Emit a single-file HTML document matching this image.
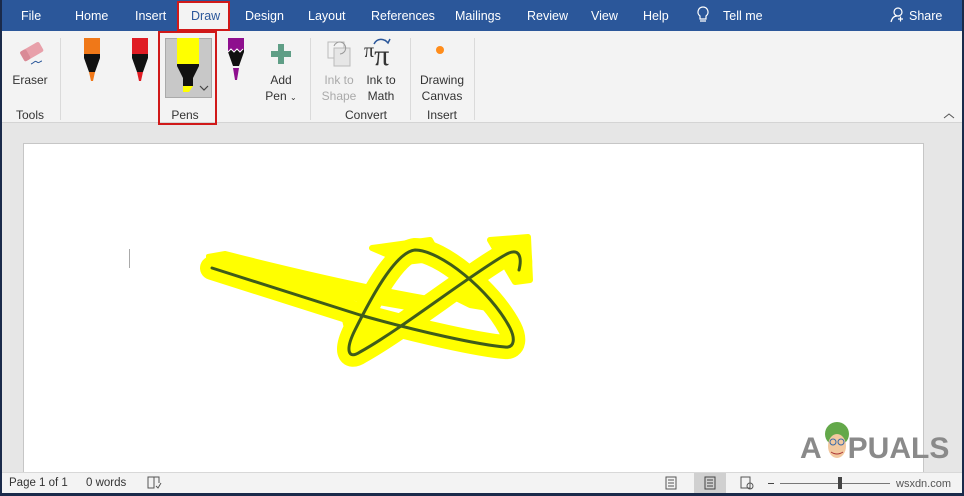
<!DOCTYPE html>
<html><head><meta charset="utf-8"><style>
*{margin:0;padding:0;box-sizing:border-box}
body{width:964px;height:496px;overflow:hidden;position:relative;background:#e6e6e6;font-family:"Liberation Sans",sans-serif;font-size:12px;color:#333}
.abs{position:absolute}
#tb{left:0;top:0;width:964px;height:31px;background:#2b579a}
.tab{position:absolute;top:9px;color:#fff;font-size:12.5px;white-space:nowrap}
#rib{left:0;top:31px;width:964px;height:92px;background:#f3f3f3;border-bottom:1px solid #d4d4d4}
.lbl{position:absolute;font-size:12px;color:#333;text-align:center;white-space:nowrap;line-height:16px}
.sep{position:absolute;top:38px;width:1px;height:82px;background:#dadada}
#status{left:0;top:472px;width:964px;height:24px;background:#f3f3f3;border-top:1px solid #d8d8d8}
</style></head><body>
<div id="tb" class="abs"></div>
<div class="abs" style="left:177px;top:1px;width:53px;height:30px;background:#f3f3f3;border:2px solid #d01919"></div>
<span class="tab" style="left:21px">File</span>
<span class="tab" style="left:75px">Home</span>
<span class="tab" style="left:135px">Insert</span>
<span class="tab" style="left:191px;color:#2b579a">Draw</span>
<span class="tab" style="left:245px">Design</span>
<span class="tab" style="left:308px">Layout</span>
<span class="tab" style="left:371px">References</span>
<span class="tab" style="left:455px">Mailings</span>
<span class="tab" style="left:527px">Review</span>
<span class="tab" style="left:591px">View</span>
<span class="tab" style="left:643px">Help</span>
<svg class="abs" style="left:696px;top:6px" width="14" height="18" viewBox="0 0 14 18"><path d="M7 1a5 5 0 0 0-3 9v3h6v-3a5 5 0 0 0-3-9zM4 15h6" fill="none" stroke="#fff" stroke-width="1.2"/></svg>
<span class="tab" style="left:723px">Tell me</span>
<svg class="abs" style="left:889px;top:7px" width="16" height="16" viewBox="0 0 16 16"><circle cx="9" cy="5" r="4" fill="none" stroke="#fff" stroke-width="1.2"/><path d="M2 15c1-4 3-6 6-6M9 12h5M11.5 9.5v5" fill="none" stroke="#fff" stroke-width="1.2"/></svg>
<span class="tab" style="left:909px">Share</span>

<div id="rib" class="abs"></div>
<svg class="abs" style="left:17px;top:40px" width="30" height="28" viewBox="0 0 30 28"><g transform="rotate(-30 15 12)"><rect x="4" y="6" width="22" height="11" rx="2" fill="#e8a0aa"/><rect x="4" y="6" width="7" height="11" rx="2" fill="#d98a96"/></g><path d="M14 24c3-1 4-4 6-2s3-1 5-1" fill="none" stroke="#2b579a" stroke-width="1"/></svg>
<div class="lbl" style="left:10px;top:72px;width:40px">Eraser</div>
<div class="lbl" style="left:10px;top:107px;width:40px">Tools</div>
<div class="sep" style="left:60px"></div>
<svg class="abs" style="left:82px;top:38px" width="20" height="44" viewBox="0 0 20 44"><rect x="2" y="0" width="16" height="16" fill="#f07818"/><path d="M2 16h16v4l-5 14h-6l-5-14z" fill="#111"/><path d="M7 34h6l-2 9h-2z" fill="#f07818"/></svg>
<svg class="abs" style="left:130px;top:38px" width="20" height="44" viewBox="0 0 20 44"><rect x="2" y="0" width="16" height="16" fill="#e01c24"/><path d="M2 16h16v4l-5 14h-6l-5-14z" fill="#111"/><path d="M7 34h6l-2 9h-2z" fill="#e01c24"/></svg>
<div class="abs" style="left:165px;top:38px;width:47px;height:60px;background:#c8c8c8;border:1px solid #aaa"></div>
<svg class="abs" style="left:173px;top:38px" width="32" height="58" viewBox="0 0 32 58"><rect x="4" y="0" width="22" height="26" fill="#ffff00"/><path d="M4 26h22v2l-6 12v8h-10v-8l-6-12z" fill="#111"/><path d="M10 48h10l-4 6h-6z" fill="#ffff00"/></svg>
<svg class="abs" style="left:198px;top:84px" width="12" height="8"><path d="M2 2l4 4 4-4" fill="none" stroke="#444" stroke-width="1.2"/></svg>
<div class="abs" style="left:158px;top:31px;width:59px;height:94px;border:2px solid #d01919"></div>
<div class="lbl" style="left:165px;top:107px;width:40px">Pens</div>
<svg class="abs" style="left:226px;top:38px" width="20" height="44" viewBox="0 0 20 44"><rect x="2" y="0" width="16" height="14" fill="#8e0f8e"/><path d="M2 14l3-3 3 3 3-3 3 3 3-3 1 1v2l-5 14h-6l-5-14z" fill="#111"/><path d="M2 14l3-3 3 3 3-3 3 3 3-3" fill="none" stroke="#fff" stroke-width="1"/><path d="M7 30h6l-2 12h-2z" fill="#8e0f8e"/></svg>
<svg class="abs" style="left:271px;top:44px" width="20" height="20"><path d="M7 0h6v7h7v6h-7v7h-6v-7h-7v-6h7z" fill="#5f9e86"/></svg>
<div class="lbl" style="left:258px;top:72px;width:46px">Add<br>Pen <span style="font-size:8px">&#8964;</span></div>
<div class="sep" style="left:310px"></div>
<svg class="abs" style="left:324px;top:38px" width="30" height="34"><rect x="4" y="4" width="16" height="16" fill="none" stroke="#bbb"/><rect x="10" y="10" width="16" height="18" fill="#e6e6e6" stroke="#bbb"/><path d="M10 8a6 6 0 1 1 6 8" fill="none" stroke="#999"/></svg>
<div class="lbl" style="left:318px;top:72px;width:42px;color:#aaa">Ink to<br>Shape</div>
<div class="abs" style="left:364px;top:34px;font-family:'Liberation Serif',serif;font-size:30px;color:#333;line-height:34px"><span style="font-size:20px;vertical-align:8px">π</span>π</div>
<svg class="abs" style="left:372px;top:36px" width="20" height="10"><path d="M2 8c3-6 10-6 14-1M13 4l3 3 2-4" fill="none" stroke="#2b579a" stroke-width="1.5"/></svg>
<div class="lbl" style="left:360px;top:72px;width:42px">Ink to<br>Math</div>
<div class="sep" style="left:410px"></div>
<div class="abs" style="left:436px;top:46px;width:8px;height:8px;border-radius:50%;background:#ff8c1a"></div>
<div class="lbl" style="left:414px;top:72px;width:56px">Drawing<br>Canvas</div>
<div class="lbl" style="left:345px;top:107px;width:30px">Convert</div>
<div class="lbl" style="left:426px;top:107px;width:32px">Insert</div>
<div class="sep" style="left:474px"></div>
<svg class="abs" style="left:943px;top:112px" width="12" height="8"><path d="M1 6l5-4 5 4" fill="none" stroke="#555" stroke-width="1"/></svg>

<div class="abs" style="left:23px;top:143px;width:901px;height:340px;background:#fff;border:1px solid #c6c6c6"></div>
<div class="abs" style="left:129px;top:249px;width:1px;height:19px;background:#aaa"></div>
<svg class="abs" style="left:0;top:0" width="964" height="496">
<g fill="#ffff00" stroke="#ffff00" stroke-linejoin="round">
<path d="M208,256 L225,253 C300,272 380,290 440,300 L430,312 C360,300 280,285 208,275 Z" stroke-width="4"/>
<path d="M212,268 L360,315 C420,332 480,345 505,347 C515,348 515,338 510,328 C490,290 440,250 415,250 C395,252 370,300 355,330 C345,350 348,360 360,352 C400,330 470,275 505,255 C520,246 522,258 519,270" fill="none" stroke-width="24" stroke-linecap="round"/>
<path d="M372,248 L430,240 L440,258 L405,262 Z M490,240 L528,237 L530,280 L515,282 Z M440,290 L480,290 L500,310 L470,305 Z M345,320 L375,308 L380,325 L350,340 Z" stroke-width="6"/>
</g>
<path d="M212,268 L360,315 C420,332 480,345 505,347 C515,348 515,338 510,328 C490,290 440,250 415,250 C395,252 370,300 355,330 C345,350 348,360 360,352 C400,330 470,275 505,255 C520,246 522,258 519,270" fill="none" stroke="#3f5c1a" stroke-width="3" stroke-linecap="round"/>
</svg>
<div class="abs" style="left:800px;top:432px;font-size:30px;font-weight:bold;color:#8a8a8a;white-space:nowrap;line-height:34px">A<span style="display:inline-block;width:26px"></span>PUALS</div>
<svg class="abs" style="left:822px;top:418px" width="30" height="54"><circle cx="15" cy="16" r="12" fill="#63a84a"/><ellipse cx="15" cy="28" rx="9" ry="12" fill="#f2c9a0"/><circle cx="11" cy="24" r="3" fill="none" stroke="#3a6aa8"/><circle cx="19" cy="24" r="3" fill="none" stroke="#3a6aa8"/><path d="M9 34q6 4 12 0" stroke="#a33" fill="none"/></svg>

<div id="status" class="abs"></div>
<span class="abs" style="left:9px;top:477px;font-size:11.5px">Page 1 of 1</span>
<span class="abs" style="left:86px;top:477px;font-size:11.5px">0 words</span>
<svg class="abs" style="left:146px;top:475px" width="16" height="16"><path d="M2 2h6v11H2zM8 2h5v6M10 11l2 2 3-5" fill="none" stroke="#555"/></svg>
<svg class="abs" style="left:665px;top:476px" width="12" height="14"><rect x="1" y="1" width="10" height="12" fill="none" stroke="#555"/><path d="M3 4h6M3 7h6M3 10h6" stroke="#555"/></svg>
<div class="abs" style="left:694px;top:473px;width:32px;height:20px;background:#d0d0d0"></div>
<svg class="abs" style="left:704px;top:476px" width="12" height="14"><rect x="1" y="1" width="10" height="12" fill="none" stroke="#444"/><path d="M3 4h6M3 7h6M3 10h6" stroke="#444"/></svg>
<svg class="abs" style="left:740px;top:476px" width="14" height="14"><rect x="1" y="1" width="9" height="11" fill="none" stroke="#555"/><circle cx="10" cy="10" r="3" fill="none" stroke="#555"/></svg>
<div class="abs" style="left:768px;top:483px;width:6px;height:1px;background:#444"></div>
<div class="abs" style="left:780px;top:483px;width:110px;height:1px;background:#777"></div>
<div class="abs" style="left:838px;top:477px;width:4px;height:12px;background:#444"></div>
<span class="abs" style="left:896px;top:478px;font-size:11px;color:#555">wsxdn.com</span>
<div class="abs" style="left:0;top:0;width:2px;height:496px;background:#1a2a4a"></div>
<div class="abs" style="right:0;top:0;width:2px;height:496px;background:#1a2a4a"></div>
<div class="abs" style="left:0;bottom:0;width:964px;height:3px;background:#1a2a4a"></div>
</body></html>
